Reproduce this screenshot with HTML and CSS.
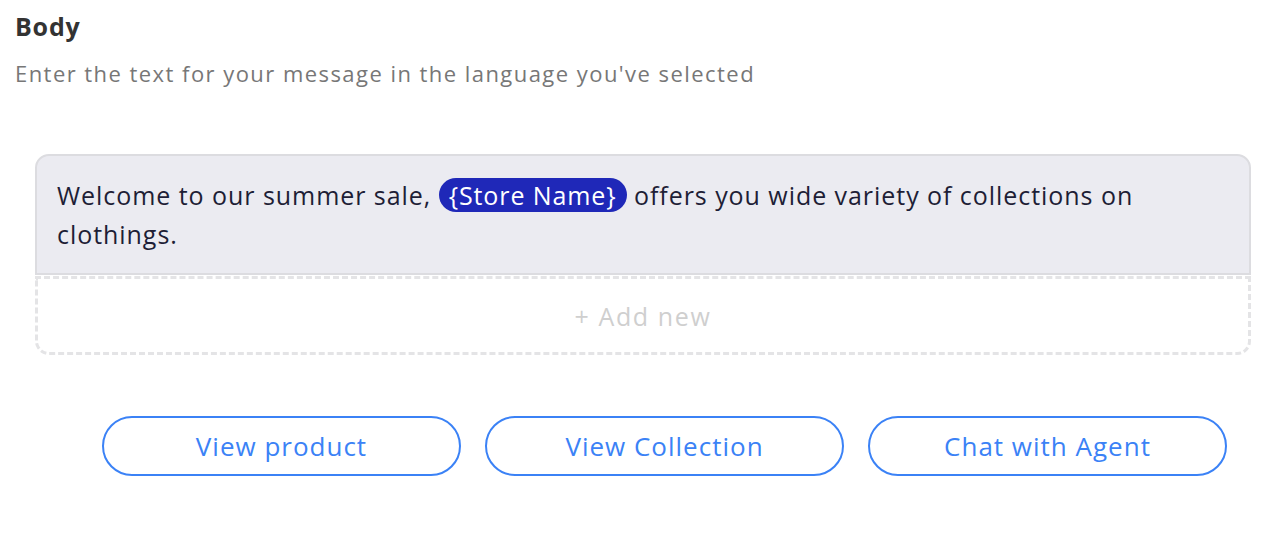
FILE: index.html
```html
<!DOCTYPE html>
<html lang="en">
<head>
<meta charset="utf-8">
<title>Body</title>
<link rel="stylesheet" href="styles.css">
</head>
<body>
<div class="page">
  <h2 class="title">Body</h2>
  <p class="subtitle">Enter the text for your message in the language you've selected</p>
  <div class="editor">
    <div class="message">Welcome to our summer sale, <span class="chip">{Store Name}</span> offers you wide variety of collections on clothings.</div>
    <div class="add-new">+ Add new</div>
    <div class="actions">
      <button class="action">View product</button>
      <button class="action">View Collection</button>
      <button class="action">Chat with Agent</button>
    </div>
  </div>
</div>
</body>
</html>
```
FILE: styles.css
```css
* { box-sizing: border-box; }
body {
  margin: 0;
  background: #ffffff;
  font-family: "Open Sans", "Liberation Sans", sans-serif;
}
.page {
  padding: 8px 0 0 15px;
}
.title {
  margin: 0;
  font-size: 25px;
  line-height: 36px;
  font-weight: 700;
  color: #333333;
  letter-spacing: 0.8px;
}
.subtitle {
  margin: 13px 0 0 0;
  font-size: 22px;
  line-height: 32px;
  color: #777777;
  letter-spacing: 1.45px;
  white-space: nowrap;
}
.editor {
  margin: 65px 37px 0 20px;
}
.message {
  height: 121px;
  background: #ebebf1;
  border: 2px solid #dcdce0;
  border-radius: 14px 14px 0 0;
  padding: 20px 20px 0 20px;
  font-size: 25px;
  line-height: 39px;
  color: #1e1e36;
  letter-spacing: 0.95px;
}
.chip {
  display: inline-block;
  vertical-align: baseline;
  background: #1f28b8;
  color: #ffffff;
  border-radius: 18px;
  padding: 0 10px;
  line-height: 34px;
  letter-spacing: 0.9px;
}
.add-new {
  margin-top: 1px;
  height: 79px;
  border: 3px dashed #e4e4e6;
  border-radius: 0 0 14px 14px;
  display: flex;
  align-items: center;
  justify-content: center;
  font-size: 25px;
  color: #cfcfcf;
  letter-spacing: 1.6px;
}
.actions {
  margin-top: 61px;
  display: flex;
  justify-content: flex-end;
  gap: 24px;
  padding-right: 24px;
}
.action {
  width: 359px;
  height: 60px;
  background: #ffffff;
  border: 2px solid #3b82f6;
  border-radius: 30px;
  font-family: "Open Sans", "Liberation Sans", sans-serif;
  font-size: 26px;
  color: #3b82f6;
  letter-spacing: 1px;
  cursor: pointer;
}
```
